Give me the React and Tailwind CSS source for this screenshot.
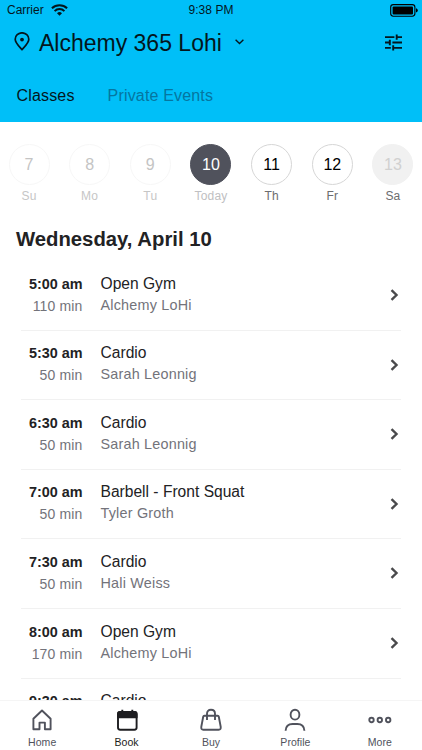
import React from 'react'

const days = [
  { num: '7', label: 'Su', circle: 'border-[#f7f7f7] text-[#c4c4c4]', text: 'text-[#c6c6c6]' },
  { num: '8', label: 'Mo', circle: 'border-[#f7f7f7] text-[#c4c4c4]', text: 'text-[#c6c6c6]' },
  { num: '9', label: 'Tu', circle: 'border-[#f7f7f7] text-[#c4c4c4]', text: 'text-[#c6c6c6]' },
  { num: '10', label: 'Today', circle: 'border-[#50525c] bg-[#50525c] text-white', text: 'text-[#c0c0c2]' },
  { num: '11', label: 'Th', circle: 'border-[#d6d6d6] text-black', text: 'text-[#6c6c6e]' },
  { num: '12', label: 'Fr', circle: 'border-[#d6d6d6] text-black', text: 'text-[#6c6c6e]' },
  { num: '13', label: 'Sa', circle: 'border-[#f1f1f1] bg-[#f1f1f1] text-[#d0d0d0]', text: 'text-[#6c6c6e]' },
]

const classes = [
  { time: '5:00 am', length: '110 min', name: 'Open Gym', coach: 'Alchemy LoHi' },
  { time: '5:30 am', length: '50 min', name: 'Cardio', coach: 'Sarah Leonnig' },
  { time: '6:30 am', length: '50 min', name: 'Cardio', coach: 'Sarah Leonnig' },
  { time: '7:00 am', length: '50 min', name: 'Barbell - Front Squat', coach: 'Tyler Groth' },
  { time: '7:30 am', length: '50 min', name: 'Cardio', coach: 'Hali Weiss' },
  { time: '8:00 am', length: '170 min', name: 'Open Gym', coach: 'Alchemy LoHi' },
  { time: '9:30 am', length: '', name: 'Cardio', coach: '' },
]

const iconProps = {
  width: 24,
  height: 24,
  viewBox: '0 0 24 24',
  fill: 'none',
  stroke: 'currentColor',
  strokeWidth: 1.9,
  strokeLinejoin: 'round',
}

const HomeIcon = () => (
  <svg {...iconProps}>
    <path d="M3.4 10.8 12 2.5l8.6 8.3v10.5h-5.7v-6.7H9.5v6.7H3.4z" />
  </svg>
)

const BookIcon = () => (
  <svg {...iconProps}>
    <rect x="3" y="4" width="18.6" height="17.8" rx="2.2" />
    <path d="M3 9.4V6.2Q3 4 5.2 4h14.2q2.2 0 2.2 2.2v3.2z" fill="currentColor" />
    <path d="M7.3 1.8v3M17.3 1.8v3" />
  </svg>
)

const BuyIcon = () => (
  <svg {...iconProps}>
    <path d="M5.4 7.8h13.2q1 0 1.2 1l1.9 10q.4 2.9-2 2.9H4.3q-2.4 0-2-2.9l1.9-10q.2-1 1.2-1z" />
    <path d="M8 12V5.8q0-4 4-4t4 4V12" />
  </svg>
)

const ProfileIcon = () => (
  <svg {...iconProps}>
    <ellipse cx="12" cy="6.7" rx="4.4" ry="4.9" />
    <path d="M2.6 22.8q.3-6.8 7-6.8h4.8q6.7 0 7 6.8" />
  </svg>
)

const MoreIcon = () => (
  <svg {...iconProps}>
    <circle cx="3.5" cy="12" r="2.2" />
    <circle cx="11.8" cy="12" r="2.2" />
    <circle cx="20.2" cy="12" r="2.2" />
  </svg>
)

const tabs = [
  { label: 'Home', Icon: HomeIcon },
  { label: 'Book', Icon: BookIcon, active: true },
  { label: 'Buy', Icon: BuyIcon },
  { label: 'Profile', Icon: ProfileIcon },
  { label: 'More', Icon: MoreIcon },
]

const StatusBar = () => (
  <div className="grid h-5 grid-cols-3 items-center text-[12px] leading-5">
    <div className="flex items-center gap-[7px] pl-[7px]">
      <span>Carrier</span>
      <svg width="17" height="12" viewBox="0 0 17 12" fill="none" stroke="currentColor" strokeWidth="2">
        <path d="M.9 4.3a11 11 0 0 1 15.2 0M3.6 7.1a7 7 0 0 1 9.8 0" />
        <path d="m8.5 11.8-2.5-2.6a3.6 3.6 0 0 1 5 0z" fill="currentColor" stroke="none" />
      </svg>
    </div>
    <span className="text-center tracking-[0.05px]">9:38 PM</span>
    <div className="flex justify-end pr-[4px]">
      <svg width="28" height="13" viewBox="0 0 28 13">
        <rect x=".7" y=".6" width="24.2" height="11.6" rx="2.6" fill="none" stroke="black" strokeWidth="1.1" />
        <rect x="2.6" y="2.4" width="20.4" height="8" rx="1" fill="black" />
        <path d="M26 4.2q1.8.6 1.8 2.2T26 8.6z" fill="black" />
      </svg>
    </div>
  </div>
)

const Header = () => (
  <header className="h-[122px] shrink-0 bg-[#00bff8] text-[#04161d]">
    <StatusBar />
    <div className="flex h-[45px] items-center pl-[14px] pr-[20px]">
      <svg className="mb-[2px]" width="16" height="19" viewBox="0 0 16 19" fill="none" stroke="currentColor" strokeWidth="1.7">
        <path d="M8 17.6C5.2 14.6 1.2 11 1.2 7.3a6.8 6.5 0 0 1 13.6 0C14.8 11 10.8 14.6 8 17.6z" />
        <circle cx="8" cy="7.6" r="1.9" fill="currentColor" stroke="none" />
      </svg>
      <h1 className="ml-[9px] text-[23px] leading-[28px]">Alchemy 365 Lohi</h1>
      <svg className="mb-[2px] ml-[13px]" width="9" height="6" viewBox="0 0 9 6" fill="none" stroke="currentColor" strokeWidth="1.4">
        <path d="m.6.8 3.9 3.8L8.4.8" />
      </svg>
      <svg className="ml-auto" width="17" height="17" viewBox="0 0 17 17" fill="none" stroke="currentColor" strokeWidth="1.9">
        <path d="M0 3.1h9.4M11.7.4v5.4M11.7 3.1H17M0 8.5h4.8M4.8 5.8v5.4M7.4 8.5H17M0 13.9h5.8M8.2 11.2v5.4M8.2 13.9H17" />
      </svg>
    </div>
    <nav className="flex gap-[33px] pl-[16.5px] pt-[19px] text-[16px] leading-6 tracking-[0.17px]">
      <span>Classes</span>
      <span className="text-[#0576a0]">Private Events</span>
    </nav>
  </header>
)

const DayPicker = () => (
  <div className="flex shrink-0 justify-between pl-[2px] pr-[2px] pt-[22px]">
    {days.map((day) => (
      <div key={day.num} className="flex w-[54px] flex-col items-center">
        <div className={`flex h-[41px] w-[41px] items-center justify-center rounded-full border pt-px text-[16px] ${day.circle}`}>
          {day.num}
        </div>
        <span className={`mt-[3px] text-[12px] leading-[16px] tracking-[0.2px] ${day.text}`}>{day.label}</span>
      </div>
    ))}
  </div>
)

const ClassRow = ({ item }) => (
  <li className="flex h-[69.6px] shrink-0 border-b border-[#f1f1f1] pt-[11.7px]">
    <div className="w-[61.5px] text-right">
      <div className="text-[14.4px] font-bold leading-[22px] text-[#222224]">{item.time}</div>
      <div className="text-[14px] leading-[22px] tracking-[0.15px] text-[#73737a]">{item.length}</div>
    </div>
    <div className="ml-[18px] grow">
      <div className="text-[15.6px] leading-[22px] text-[#222224]">{item.name}</div>
      <div className="text-[14.4px] leading-[21px] tracking-[0.2px] text-[#73737a]">{item.coach}</div>
    </div>
    <svg className="mr-[2px] mt-[16.3px]" width="9" height="12" viewBox="0 0 9 12" fill="none" stroke="#4a4a4c" strokeWidth="2.4">
      <path d="m1.5 1.2 5 4.8-5 4.8" />
    </svg>
  </li>
)

const TabBar = () => (
  <nav className="flex h-[50px] shrink-0 border-t border-[#f5f5f5] bg-white">
    {tabs.map(({ label, Icon, active }) => (
      <div
        key={label}
        className={`flex flex-1 flex-col items-center pt-[7px] ${active ? 'text-[#1d1d20]' : 'text-[#50525c]'}`}
      >
        <Icon />
        <span className="mt-[3px] text-[10.5px] leading-[14px] tracking-[0.05px]">{label}</span>
      </div>
    ))}
  </nav>
)

const App = () => {
  return (
    <div className="flex h-[750px] w-[422px] flex-col overflow-hidden bg-white font-['Liberation_Sans',Arial,sans-serif]">
      <Header />
      <DayPicker />
      <main className="flex min-h-0 flex-1 flex-col overflow-hidden">
        <h2 className="shrink-0 pl-[16px] pt-[21px] text-[20.3px] font-bold leading-[28px] text-[#222224]">
          Wednesday, April 10
        </h2>
        <ul className="ml-[21px] mr-[21px] mt-[8px] flex flex-col">
          {classes.map((item) => (
            <ClassRow key={item.time} item={item} />
          ))}
        </ul>
      </main>
      <TabBar />
    </div>
  )
}

export default App
